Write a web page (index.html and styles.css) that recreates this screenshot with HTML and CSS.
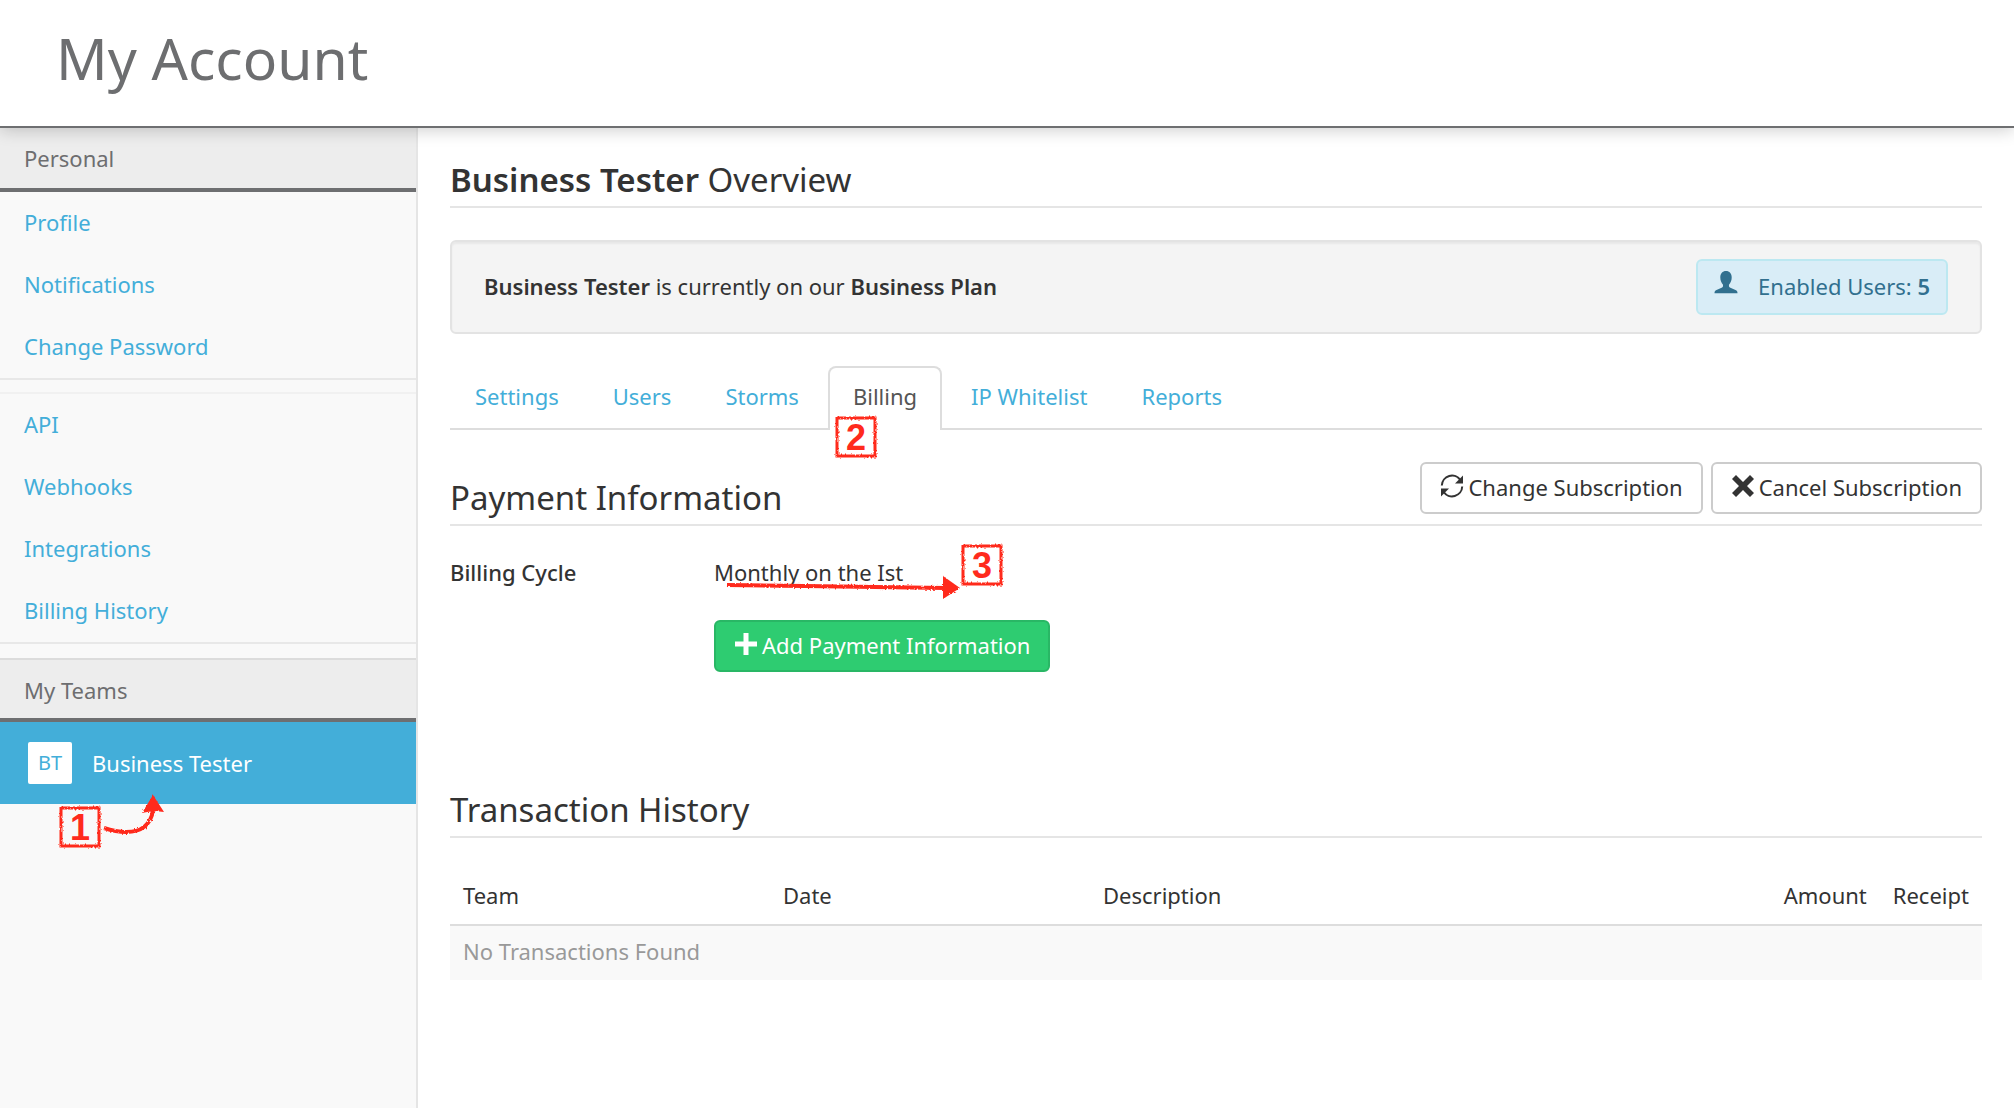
FILE: index.html
```html
<!DOCTYPE html>
<html lang="en">
<head>
<meta charset="utf-8">
<meta name="viewport" content="width=device-width, initial-scale=1">
<title>My Account</title>
<link rel="stylesheet" href="styles.css">
</head>
<body>
<svg class="defs" aria-hidden="true">
  <filter id="crayon" x="-10%" y="-10%" width="120%" height="120%" filterUnits="objectBoundingBox">
    <feTurbulence type="fractalNoise" baseFrequency="0.5" numOctaves="2" seed="4" result="n"/>
    <feDisplacementMap in="SourceGraphic" in2="n" scale="3"/>
  </filter>
</svg>
<header class="page-header"><h1>My Account</h1></header>
<div class="layout">
  <nav class="sidebar" aria-label="Account">
    <h2 class="side-heading">Personal</h2>
    <ul class="side-list">
      <li><a href="#">Profile</a></li>
      <li><a href="#">Notifications</a></li>
      <li><a href="#">Change Password</a></li>
    </ul>
    <ul class="side-list">
      <li><a href="#">API</a></li>
      <li><a href="#">Webhooks</a></li>
      <li><a href="#">Integrations</a></li>
      <li><a href="#">Billing History</a></li>
    </ul>
    <h2 class="side-heading">My Teams</h2>
    <ul class="team-list">
      <li>
        <a class="team" href="#"><span class="avatar">BT</span><span>Business Tester</span></a>
        <span class="callout callout-team">1<svg class="frame" viewBox="0 0 42 42"><rect x="2" y="2" width="38" height="38"/></svg></span>
        <svg class="arrow arrow-team" viewBox="0 0 64 42" aria-hidden="true">
          <path class="stroke" d="M2 33C17 38 33 39 42 32C47 28 50 23 51 15"/>
          <path class="head" d="M51 0L62 17Q51 15 40 18Z"/>
        </svg>
      </li>
    </ul>
  </nav>
  <main class="content">
    <h2 class="title"><strong>Business Tester</strong> Overview</h2>
    <section class="well">
      <p><strong>Business Tester</strong> is currently on our <strong>Business Plan</strong></p>
      <div class="badge">
        <svg class="icon" viewBox="0 0 24 24" aria-hidden="true"><path d="M12 1C8.500 1 6.300 3.600 6.300 7.500C6.300 10.500 7.500 13 8.900 14.400C9.300 16.300 9 17 7.600 17.700L2.500 20C1 20.700.500 21.400.500 23.300H23.500C23.500 21.400 23 20.700 21.500 20L16.400 17.700C15 17 14.700 16.300 15.100 14.400C16.500 13 17.700 10.500 17.700 7.500C17.700 3.600 15.500 1 12 1Z"/></svg>
        <span>Enabled Users: <strong>5</strong></span>
      </div>
    </section>
    <ul class="tabs">
      <li><a href="#">Settings</a></li>
      <li><a href="#">Users</a></li>
      <li><a href="#">Storms</a></li>
      <li class="active"><a href="#" aria-current="page">Billing</a>
        <span class="callout callout-tab">2<svg class="frame" viewBox="0 0 42 42"><rect x="2" y="2" width="38" height="38"/></svg></span></li>
      <li><a href="#">IP Whitelist</a></li>
      <li><a href="#">Reports</a></li>
    </ul>
    <section class="payment">
      <div class="section-head">
        <h2>Payment Information</h2>
        <div class="actions">
          <button type="button" class="btn">
            <svg class="icon" viewBox="0 0 24 24" aria-hidden="true"><path class="line" d="M1.800 11.500A10.200 10.200 0 0 1 20.500 6.200M22.200 12.500A10.200 10.200 0 0 1 3.500 17.800"/><path d="M23 1.500V9.500H15ZM1 22.500V14.500H9Z"/></svg>
            Change Subscription</button>
          <button type="button" class="btn">
            <svg class="icon" viewBox="0 0 24 24" aria-hidden="true"><path d="M5 1L12 8L19 1L23 5L16 12L23 19L19 23L12 16L5 23L1 19L8 12L1 5Z"/></svg>
            Cancel Subscription</button>
        </div>
      </div>
      <dl class="billing">
        <dt>Billing Cycle</dt>
        <dd>Monthly on the Ist
          <svg class="arrow arrow-cycle" viewBox="0 0 236 26" aria-hidden="true">
            <path class="stroke" d="M2 11L80 12L220 14"/>
            <path class="head" d="M218 2L235 14L218 25Z"/>
          </svg>
          <span class="callout callout-cycle">3<svg class="frame" viewBox="0 0 42 42"><rect x="2" y="2" width="38" height="38"/></svg></span>
        </dd>
      </dl>
      <button type="button" class="btn btn-success">
        <svg class="icon" viewBox="0 0 24 24" aria-hidden="true"><path d="M9.500 1H14.500V9.500H23V14.500H14.500V23H9.500V14.500H1V9.500H9.500Z"/></svg>
        Add Payment Information</button>
    </section>
    <section>
      <h2 class="title">Transaction History</h2>
      <table class="transactions">
        <thead><tr><th>Team</th><th>Date</th><th class="wide">Description</th><th class="fit">Amount</th><th class="fit">Receipt</th></tr></thead>
        <tbody><tr><td colspan="5">No Transactions Found</td></tr></tbody>
      </table>
    </section>
  </main>
</div>
</body>
</html>
```
FILE: styles.css
```css
* { box-sizing: border-box; }
body {
  margin: 0;
  min-height: 100vh;
  display: flex;
  flex-direction: column;
  background: #fff;
  color: #333;
  font: 22px/32px "Noto Sans", "Open Sans", sans-serif;
}
h1, h2, p, ul, dl, dd { margin: 0; padding: 0; font-weight: 400; }
ul { list-style: none; }
a { color: #43aed9; text-decoration: none; }
strong { font-weight: 600; }
.defs { position: absolute; width: 0; height: 0; }

.page-header {
  position: relative;
  z-index: 1;
  padding: 18px 56px 28px;
  border-bottom: 2px solid #6e6f71;
  box-shadow: 0 2px 16px rgba(0, 0, 0, .2);
  color: #6d6e70;
}
h1 { font-size: 57px; line-height: 80px; }

.layout { flex: 1; display: flex; }
.sidebar {
  flex: none;
  width: 418px;
  background: #f9f9f9;
  border-right: 2px solid #e5e5e5;
}
.side-heading {
  padding: 14px 24px;
  background: #ededed;
  border-bottom: 4px solid #6e6f71;
  color: #6d6e70;
  font-size: 22px;
  line-height: 32px;
}
.side-list {
  margin-bottom: 12px;
  border-bottom: 2px solid #e8e8e8;
}
.side-list + .side-list { border-top: 2px solid #f1f1f1; }
.side-list + .side-heading {
  margin-top: 14px;
  padding-bottom: 12px;
  border-top: 2px solid #dcdcdc;
}
.side-list a { display: block; padding: 14px 24px 16px; }
.team-list li { position: relative; }
.team {
  display: flex;
  align-items: center;
  gap: 20px;
  padding: 20px 28px;
  background: #43aed9;
  color: #fff;
}
.avatar {
  width: 44px;
  line-height: 42px;
  border-radius: 2px;
  background: #fff;
  color: #43aed9;
  font-size: 20px;
  text-align: center;
}

.content { flex: 1; min-width: 0; padding: 32px; }
.title, .section-head {
  padding-bottom: 6px;
  border-bottom: 2px solid #e5e5e5;
}
.title, .section-head h2 { font-size: 33px; line-height: 40px; }
.well {
  display: flex;
  justify-content: space-between;
  align-items: center;
  margin: 32px 0;
  padding: 17px 32px;
  border: 2px solid #e3e3e3;
  border-radius: 6px;
  background: #f4f4f4;
  box-shadow: inset 0 2px 2px rgba(0, 0, 0, .05);
}
.well p { padding-bottom: 2px; }
.badge {
  display: flex;
  align-items: flex-start;
  gap: 20px;
  padding: 9px 16px 11px;
  border: 2px solid #bce8f1;
  border-radius: 6px;
  background: #d9edf7;
  color: #31708f;
}
.icon { width: 24px; height: 24px; flex: none; fill: currentColor; }
.icon .line { fill: none; stroke: currentColor; stroke-width: 2; }

.tabs { display: flex; gap: 4px; border-bottom: 2px solid #ddd; }
.tabs li { position: relative; margin-bottom: -2px; }
.tabs a {
  display: block;
  padding: 12px 23px 18px;
  border: 2px solid transparent;
  border-bottom: 0;
  border-radius: 8px 8px 0 0;
}
.tabs .active a { background: #fff; border-color: #ddd; color: #555; }

.section-head { display: flex; justify-content: space-between; align-items: flex-start; }
.section-head h2 { padding-top: 16px; }
.payment { padding: 32px 0 118px; }
.actions { display: flex; gap: 8px; }
.btn {
  display: flex;
  align-items: flex-start;
  gap: 4px;
  padding: 7px 18px 9px;
  border: 2px solid #ccc;
  border-radius: 6px;
  background: #fff;
  color: #333;
  font: inherit;
}
.btn .icon { margin-top: 3px; }
.btn-success { margin-left: 264px; background: #2ecc71; border-color: #29b765; color: #fff; }
.billing { display: flex; padding: 30px 0 32px; }
.billing dt { width: 264px; font-weight: 500; }
.billing dd { position: relative; }

.transactions { width: 100%; margin-top: 32px; border-collapse: collapse; table-layout: auto; }
.transactions th {
  width: 320px;
  padding: 9px 13px 13px;
  border-bottom: 2px solid #ddd;
  font-weight: 400;
  text-align: left;
}
.transactions .wide { width: auto; }
.transactions .fit { width: 1px; }
.transactions td { padding: 9px 13px 13px; background: #f9f9f9; color: #999; }

.callout {
  position: absolute;
  z-index: 1;
  width: 42px;
  height: 42px;
  color: #ff2a1d;
  font: bold 36px/44px "Liberation Sans", sans-serif;
  text-align: center;
}
.frame { position: absolute; inset: 0; filter: url(#crayon); }
.frame rect { fill: none; stroke: #ff2a1d; stroke-width: 3; }
.arrow { position: absolute; z-index: 1; overflow: visible; filter: url(#crayon); }
.arrow .stroke { fill: none; stroke: #ff2a1d; stroke-width: 4; }
.arrow .head { fill: #ff2a1d; }
.callout-team { left: 59px; top: 84px; }
.arrow-team { left: 102px; top: 73px; width: 64px; height: 42px; }
.callout-tab { left: 7px; top: 50px; }
.arrow-cycle { left: 11px; top: 18px; width: 236px; height: 26px; }
.callout-cycle { left: 247px; top: -12px; }
```
